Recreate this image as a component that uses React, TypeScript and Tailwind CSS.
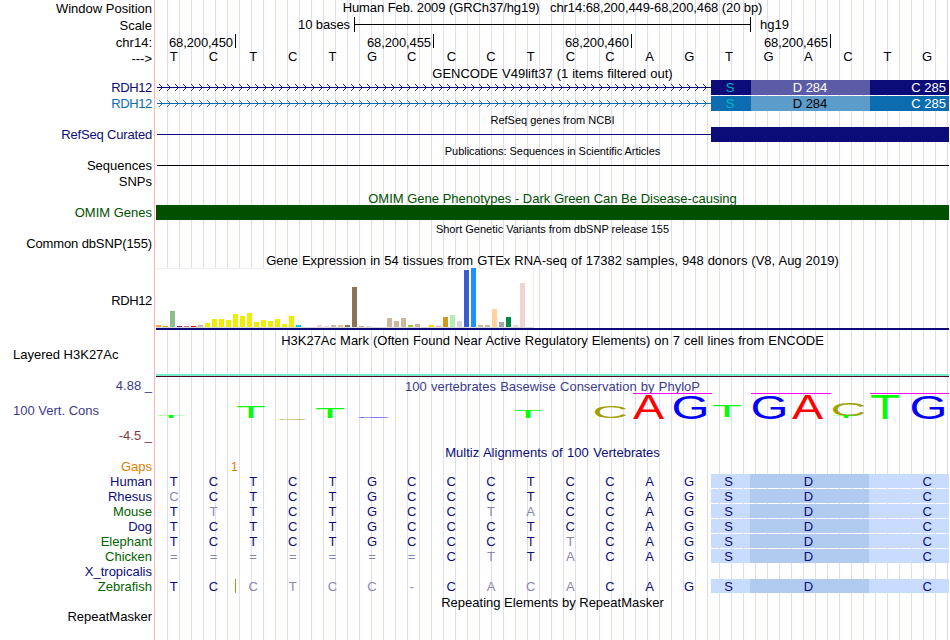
import type { ReactNode } from "react";

const bases = "TCTCTGCCCTCCAGTGACTG";

const ticks = [
  { label: "68,200,450", width: "w-[80px]" },
  { label: "68,200,455", width: "w-[198px]" },
  { label: "68,200,460", width: "w-[198px]" },
  { label: "68,200,465", width: "w-[199px]" },
];

// lower case bases differ from the human sequence
const species = [
  { name: "Human", color: "text-[#0c0c78]", seq: "TCTCTGCCCTCCAG" },
  { name: "Rhesus", color: "text-[#0c0c78]", seq: "cCTCTGCCCTCCAG" },
  { name: "Mouse", color: "text-[#006400]", seq: "TtTCTGCCtaCCAG" },
  { name: "Dog", color: "text-[#0c0c78]", seq: "TCTCTGCCCTCCAG" },
  { name: "Elephant", color: "text-[#006400]", seq: "TCTCTGCCCTtCAG" },
  { name: "Chicken", color: "text-[#006400]", seq: "=======CtTaCAG" },
  { name: "X_tropicalis", color: "text-[#0c0c78]", seq: "" },
  { name: "Zebrafish", color: "text-[#006400]", seq: "TCctcc-CacaCAG" },
];

const tissues: [number, string][] = [
  [2, "#ffa54f"], [1, "#ee9a00"], [16, "#8fbc8f"], [1, "#8b1c62"], [1, "#ee6a50"], [1, "#ff0000"],
  [2, "#cdb79e"], [4, "#eeee00"], [8, "#eeee00"], [8, "#eeee00"], [7, "#eeee00"], [13, "#eeee00"],
  [11, "#eeee00"], [14, "#eeee00"], [5, "#eeee00"], [7, "#eeee00"], [6, "#eeee00"], [8, "#eeee00"],
  [3, "#eeee00"], [11, "#eeee00"], [2, "#00cdcd"], [0, "#ee82ee"], [0, "#9ac0cd"], [2, "#eed5d2"],
  [1, "#eed5d2"], [2, "#cdb79e"], [2, "#eec591"], [2, "#8b7355"], [40, "#8b7355"], [1, "#cdaa7d"],
  [1, "#eed5d2"], [0, "#b452cd"], [0, "#7a378b"], [9, "#cdb79e"], [6, "#cdb79e"], [9, "#cdb79e"],
  [2, "#9acd32"], [3, "#cdb79e"], [0, "#7a67ee"], [2, "#ffd700"], [1, "#ffb6c1"], [10, "#cd9b1d"],
  [12, "#b4eeb4"], [6, "#d9d9d9"], [57, "#3a5fcd"], [59, "#1e90ff"], [2, "#cdb79e"], [2, "#cdb79e"],
  [18, "#ffd39b"], [5, "#a6a6a6"], [10, "#008b45"], [2, "#eed5d2"], [44, "#eed5d2"],
];

// glyph bounds in font units: left, right, bottom, top
const glyphs: Record<string, { box: [number, number, number, number]; fill: string }> = {
  A: { box: [3, 1362, 0, 1409], fill: "#ff0000" },
  C: { box: [102, 1387, -20, 1430], fill: "#a0a000" },
  G: { box: [103, 1487, -20, 1430], fill: "#0000ff" },
  T: { box: [42, 1208, 0, 1409], fill: "#00ff00" },
};

// base, left, width, top, height
const logo: [string, number, number, number, number][] = [
  ["T", 1, 28, 21, 3],
  ["T", 81, 28, 13, 11],
  ["C", 122, 29, 25, 0.6],
  ["T", 160, 28, 14, 10],
  ["G", 202, 32, 23, 0.6],
  ["T", 358, 28, 17, 7],
  ["C", 439, 31, 12, 12],
  ["A", 477, 31, 1, 24],
  ["G", 518, 33, 1, 24],
  ["T", 557, 28, 12, 11],
  ["G", 597, 33, 1, 24],
  ["A", 636, 31, 1, 24],
  ["C", 677, 31, 9, 13],
  ["T", 676, 28, 22, 2],
  ["T", 715, 28, 1, 24],
  ["G", 756, 33, 1, 24],
];

type RowProps = {
  label?: string;
  height: string;
  color?: string;
  lift?: string;
  children?: ReactNode;
};

const Row = ({ label, height, color = "text-black", lift = "", children }: RowProps) => (
  <div className={`flex shrink-0 ${height}`}>
    <div className={`flex w-[152px] shrink-0 items-center justify-end whitespace-pre ${color} ${lift}`}>{label}</div>
    <div className="ml-1 flex w-[793px] shrink-0">{children}</div>
  </div>
);

const Title = ({ text, className = "" }: { text: string; className?: string }) => (
  <div className={`flex w-full items-center justify-center whitespace-pre ${className}`}>{text}</div>
);

const Intron = ({ color }: { color: string }) => (
  <svg width="555" height="15" className="shrink-0" fill="none" stroke={color} shapeRendering="crispEdges">
    <path d="M1 7.5H555" />
    {Array.from({ length: 69 }, (_, i) => {
      const x = 3 + i * 8;
      return (
        <path
          key={i}
          strokeOpacity="0.85"
          d={`M${x} 4.5h1M${x + 1} 5.5h1M${x + 2} 6.5h1M${x + 2} 8.5h1M${x + 1} 9.5h1M${x} 10.5h1`}
        />
      );
    })}
  </svg>
);

const Transcript = ({ color, dark, light, mid }: { color: string; dark: string; light: string; mid: string }) => (
  <>
    <Intron color={color} />
    <div className="flex h-[15px] w-[238px] leading-[15px] text-white">
      <div className={`w-[40px] pr-[2px] text-center text-[#00b4c8] ${dark}`}>S</div>
      <div className={`w-[119px] pr-px text-center ${light} ${mid}`}>D 284</div>
      <div className={`w-[79px] pr-[3px] text-right ${dark}`}>C 285</div>
    </div>
  </>
);

const LogoLetter = ({ item }: { item: [string, number, number, number, number] }) => {
  const [base, x, w, y, h] = item;
  const { box, fill } = glyphs[base];
  const sx = (w / (box[1] - box[0])) * 20.48;
  const sy = (h / (box[3] - box[2])) * 20.48;
  const tx = x - (box[0] / 20.48) * sx;
  const ty = y + h + (box[2] / 20.48) * sy;
  return (
    <text fontSize="100" fill={fill} transform={`translate(${tx} ${ty}) scale(${sx} ${sy})`}>
      {base}
    </text>
  );
};

export default function App() {
  return (
    <div className="relative flex h-[640px] w-[950px] flex-col overflow-hidden bg-white font-['Liberation_Sans',Arial,sans-serif] text-[13px] leading-none text-black">
      <div className="absolute inset-y-0 left-[154px] w-px bg-[#ffb4b4]" />
      <div className="absolute inset-y-0 left-[156px] w-[793px] bg-[repeating-linear-gradient(to_right,transparent_0_11px,#dcdcff_11px_12px)]" />

      <div className="relative flex flex-col">
        <Row label="Window Position" height="h-[17px]">
          <Title text={"Human Feb. 2009 (GRCh37/hg19)   chr14:68,200,449-68,200,468 (20 bp)"} className="pb-[2px] tracking-[-0.09px]" />
        </Row>
        <Row label="Scale" height="h-[17px]" lift="pb-px">
          <div className="flex w-[194px] items-center justify-end pb-[2px] tracking-[-0.1px]">10 bases</div>
          <div className="ml-1 flex h-[15px] w-[397px] items-center border-x border-black">
            <div className="h-px w-full bg-black" />
          </div>
          <div className="ml-[9px] flex items-center pb-[2px]">hg19</div>
        </Row>
        <Row label="chr14:" height="h-[16px]">
          {ticks.map((tick) => (
            <div key={tick.label} className={`flex h-[14px] items-center justify-end border-r border-black pr-[2px] pt-[3px] tracking-[-0.1px] ${tick.width}`}>
              {tick.label}
            </div>
          ))}
        </Row>
        <Row label="--->" height="h-[16px]">
          <div className="-ml-[2px] grid w-[793px] shrink-0 grid-cols-20 items-center pb-[3px] text-center">
            {bases.split("").map((b, i) => (
              <span key={i}>{b}</span>
            ))}
          </div>
        </Row>

        <Row height="h-[14px]">
          <Title text="GENCODE V49lift37 (1 items filtered out)" className="[word-spacing:0.4px]" />
        </Row>
        <Row label="RDH12" height="h-[16px]" color="text-[#0c0c78] tracking-[-0.35px]" lift="pb-[2px]">
          <Transcript color="#0c0c78" dark="bg-[#0c0c78]" light="bg-[#5c5ca6]" mid="text-white" />
        </Row>
        <Row label="RDH12" height="h-[16px]" color="text-[#0c6cb0] tracking-[-0.35px]" lift="pb-[2px]">
          <Transcript color="#0c6cb0" dark="bg-[#0c6cb0]" light="bg-[#5c9ccb]" mid="text-black" />
        </Row>

        <Row height="h-[15px]">
          <Title text="RefSeq genes from NCBI" className="pt-px text-[11px]" />
        </Row>
        <Row label="RefSeq Curated" height="h-[16px]" color="text-[#0c0c78] tracking-[-0.18px]" lift="pb-[2px]">
          <div className="ml-px mt-[7px] h-px w-[554px] bg-[#0c0c78]" />
          <div className="h-[15px] w-[238px] bg-[#0c0c78]" />
        </Row>

        <Row height="h-[15px]">
          <Title text="Publications: Sequences in Scientific Articles" className="pt-px text-[11px] tracking-[-0.05px]" />
        </Row>
        <Row label="Sequences" height="h-[16px]" lift="pb-[2px]">
          <div className="ml-px mt-[7px] h-px w-[792px] bg-black" />
        </Row>
        <Row label="SNPs" height="h-[16px]" lift="pb-[2px]" />

        <Row height="h-[15px]">
          <Title text="OMIM Gene Phenotypes - Dark Green Can Be Disease-causing" className="pt-px text-[#005000]" />
        </Row>
        <Row label="OMIM Genes" height="h-[16px]" color="text-[#005000]" lift="pb-[2px]">
          <div className="h-[15px] w-full bg-[#005000]" />
        </Row>

        <Row height="h-[15px]">
          <Title text="Short Genetic Variants from dbSNP release 155" className="pt-px text-[11px]" />
        </Row>
        <Row label="Common dbSNP(155)" height="h-[16px]" color="text-black tracking-[-0.12px]" lift="pb-[2px]" />

        <Row height="h-[16px]">
          <Title text="Gene Expression in 54 tissues from GTEx RNA-seq of 17382 samples, 948 donors (V8, Aug 2019)" className="[word-spacing:0.36px]" />
        </Row>
        <Row label="RDH12" height="h-[65px]" color="text-black tracking-[-0.35px]">
          <div className="flex w-full flex-col">
            <div className="flex h-[60px] w-[378px] items-end gap-[2px] border-b border-r border-t border-[#f0f0f4] border-b-[#d8d8d8] bg-white">
              {tissues.map(([value, color], i) => (
                <div key={i} className="-mt-px w-[5px] shrink-0" style={{ height: value, backgroundColor: color }} />
              ))}
            </div>
            <div className="h-[2px] bg-[#0c0c78]" />
          </div>
        </Row>

        <Row height="h-[15px]">
          <Title text="H3K27Ac Mark (Often Found Near Active Regulatory Elements) on 7 cell lines from ENCODE" className="[word-spacing:0.4px]" />
        </Row>
        <div className="flex h-[30px]">
          <div className="w-[156px] pl-[13px] leading-[13px]">Layered H3K27Ac</div>
          <div className="mt-[26px] h-[3px] w-[793px] border-b border-[#500028] bg-[#78ebcd]" />
        </div>

        <Row label="4.88 _" height="h-[15px]" color="text-[#3c3c8c]">
          <Title text="100 vertebrates Basewise Conservation by PhyloP" className="pt-px text-[#3c3c8c] [word-spacing:0.6px]" />
        </Row>
        <div className="flex h-[52px]">
          <div className="flex w-[156px] flex-col pr-1">
            <span className="pl-[13px] pt-[11px] text-[#3c3c8c]">100 Vert. Cons</span>
            <span className="pt-[12px] text-right text-[#823c3c]">-4.5 _</span>
          </div>
          <svg width="793" height="52" viewBox="0 -1 793 52" className="shrink-0 overflow-visible">
            <path d="M477 -0.5h79M595 -0.5h80M714 -0.5h79" stroke="#ff00ff" />
            {logo.map((item, i) => (
              <LogoLetter key={i} item={item} />
            ))}
          </svg>
        </div>

        <Row height="h-[15px]">
          <Title text="Multiz Alignments of 100 Vertebrates" className="text-[#0c0c78] [word-spacing:0.9px]" />
        </Row>
        <Row label="Gaps" height="h-[14px]" color="text-[#e08000]" lift="pb-[2px]">
          <div className="flex w-[82px] items-center justify-end pb-[2px] text-[#e08000]">1</div>
        </Row>
        {species.map((s) => (
          <Row key={s.name} label={s.name} height="h-[15px]" color={s.color}>
            {s.seq && (
              <>
                <div className="-ml-[2px] grid w-[555px] shrink-0 grid-cols-14 items-center text-center text-[#0c0c78]">
                  {s.seq.split("").map((b, i) => (
                    <span key={i} className={b >= "A" && b <= "Z" ? "" : "text-[#8686b4]"}>
                      {b.toUpperCase()}
                    </span>
                  ))}
                </div>
                <div className="ml-[2px] flex h-[14px] w-[238px] shrink-0 leading-[15px] text-[#0c0c78]">
                  <div className="w-[39px] bg-[#c8dcff] pr-[4px] text-center">S</div>
                  <div className="w-[119px] bg-[#b0caf0] pr-[2px] text-center">D</div>
                  <div className="w-[80px] bg-[#c8dcff] pr-[17px] text-right">C</div>
                </div>
                {s.name === "Zebrafish" && <div className="-ml-[714px] h-[14px] w-px shrink-0 bg-[#e08000]" />}
              </>
            )}
          </Row>
        ))}

        <Row height="h-[16px]">
          <Title text="Repeating Elements by RepeatMasker" />
        </Row>
        <Row label="RepeatMasker" height="h-[16px]" lift="pb-[4px]" />
      </div>
    </div>
  );
}
